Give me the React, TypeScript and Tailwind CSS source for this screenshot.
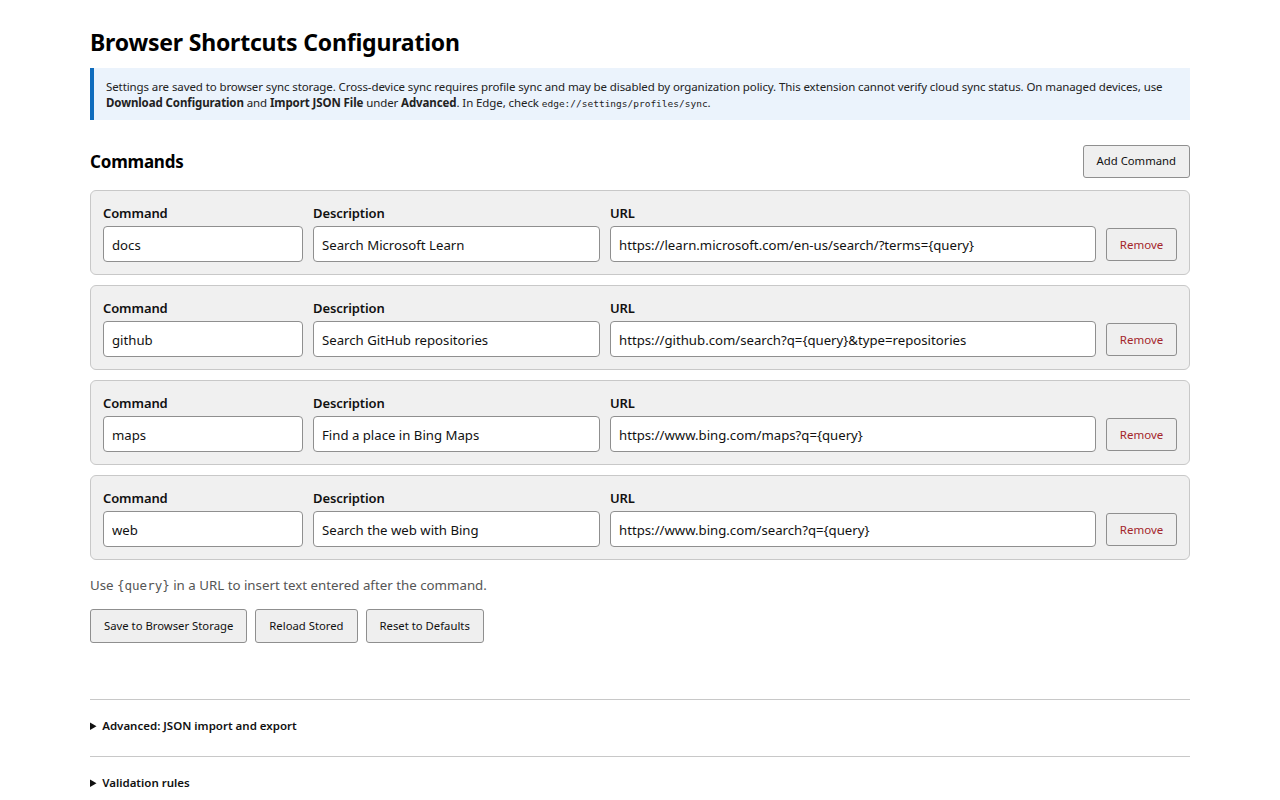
import { useState } from "react";

type Shortcut = {
  command: string;
  description: string;
  url: string;
};

const DEFAULTS: Shortcut[] = [
  {
    command: "docs",
    description: "Search Microsoft Learn",
    url: "https://learn.microsoft.com/en-us/search/?terms={query}",
  },
  {
    command: "github",
    description: "Search GitHub repositories",
    url: "https://github.com/search?q={query}&type=repositories",
  },
  {
    command: "maps",
    description: "Find a place in Bing Maps",
    url: "https://www.bing.com/maps?q={query}",
  },
  {
    command: "web",
    description: "Search the web with Bing",
    url: "https://www.bing.com/search?q={query}",
  },
];

const btn =
  "rounded-[3px] border border-[#8f8f8f] bg-[#efefef] px-[13px] text-[11.3px] text-[#111] hover:bg-[#e5e5e5]";

const input =
  "h-9 w-full rounded-[4px] border border-[#8f8f8f] bg-white px-2 pt-[1px] text-[13.2px] text-[#111] outline-none focus:border-[#0f6cbd]";

const label = "text-[13px] font-semibold leading-[17px] tracking-[-0.1px] text-[#111]";

function ShortcutRow({
  item,
  onChange,
  onRemove,
}: {
  item: Shortcut;
  onChange: (next: Shortcut) => void;
  onRemove: () => void;
}) {
  return (
    <div className="grid grid-cols-[200px_287px_1fr_71px] items-end gap-x-[10px] rounded-[6px] border border-[#c8c8c8] bg-[#f0f0f0] px-[12px] pt-[14px] pb-[12px]">
      <label className="flex flex-col gap-[4px]">
        <span className={label}>Command</span>
        <input
          className={input}
          value={item.command}
          onChange={(e) => onChange({ ...item, command: e.target.value })}
        />
      </label>
      <label className="flex flex-col gap-[4px]">
        <span className={label}>Description</span>
        <input
          className={input}
          value={item.description}
          onChange={(e) => onChange({ ...item, description: e.target.value })}
        />
      </label>
      <label className="flex flex-col gap-[4px]">
        <span className={label}>URL</span>
        <input
          className={input}
          value={item.url}
          onChange={(e) => onChange({ ...item, url: e.target.value })}
        />
      </label>
      <button
        className="mb-[1px] h-[33px] rounded-[3px] border border-[#8f8f8f] bg-[#efefef] text-[11.5px] text-[#a4262c]"
        onClick={onRemove}
      >
        Remove
      </button>
    </div>
  );
}

export default function App() {
  const [items, setItems] = useState<Shortcut[]>(DEFAULTS);

  return (
    <div className="min-h-screen bg-white font-['Noto_Sans',sans-serif] text-[#111]">
      <div className="mx-auto w-[1100px] pt-[26px] pb-10">
        <h1 className="text-[23px] font-bold leading-[32px] tracking-[-0.2px] text-black">
          Browser Shortcuts Configuration
        </h1>

        {/* Storage notice */}
        <div className="mt-[10px] border-l-4 border-[#0f6cbd] bg-[#ebf3fc] pt-[11px] pb-[9px] pr-3 pl-[12px] text-[11.5px] leading-[16px] tracking-[-0.1px] text-[#222]">
          <p className="h-4">
            Settings are saved to browser sync storage. Cross-device sync requires profile sync and may be
            disabled by organization policy. This extension cannot verify cloud sync status. On managed
            devices, use
          </p>
          <p className="h-4">
            <strong>Download Configuration</strong> and <strong>Import JSON File</strong> under{" "}
            <strong>Advanced</strong>. In Edge, check{" "}
            <code className="font-['DejaVu_Sans_Mono',monospace] text-[9.5px] leading-none tracking-normal">
              edge://settings/profiles/sync
            </code>
            .
          </p>
        </div>

        <div className="mt-[25px] flex items-center justify-between">
          <h2 className="text-[17px] font-bold tracking-[-0.2px] text-black">Commands</h2>
          <button
            className={`${btn} h-[33px]`}
            onClick={() => setItems([...items, { command: "", description: "", url: "" }])}
          >
            Add Command
          </button>
        </div>

        <div className="mt-3 flex flex-col gap-[10px]">
          {items.map((item, i) => (
            <ShortcutRow
              key={i}
              item={item}
              onChange={(next) => setItems(items.map((it, j) => (j === i ? next : it)))}
              onRemove={() => setItems(items.filter((_, j) => j !== i))}
            />
          ))}
        </div>

        <p className="mt-[15px] text-[13.3px] leading-[20px] text-[#555]">
          Use <code className="font-['DejaVu_Sans_Mono',monospace] text-[12.5px]">{"{query}"}</code> in a URL
          to insert text entered after the command.
        </p>

        <div className="mt-[13px] flex gap-2">
          <button className={`${btn} h-[34px]`}>Save to Browser Storage</button>
          <button className={`${btn} h-[34px]`}>Reload Stored</button>
          <button className={`${btn} h-[34px]`} onClick={() => setItems(DEFAULTS)}>
            Reset to Defaults
          </button>
        </div>

        <div className="mt-[56px] border-t border-[#c8c8c8]">
          <details className="pt-[18px] pb-[22px]">
            <summary className="cursor-pointer text-[11.5px] leading-[16px] font-semibold">
              Advanced: JSON import and export
            </summary>
          </details>
        </div>
        <div className="border-t border-[#c8c8c8]">
          <details className="pt-[18px] pb-[22px]">
            <summary className="cursor-pointer text-[11.5px] leading-[16px] font-semibold">Validation rules</summary>
          </details>
        </div>
      </div>
    </div>
  );
}
